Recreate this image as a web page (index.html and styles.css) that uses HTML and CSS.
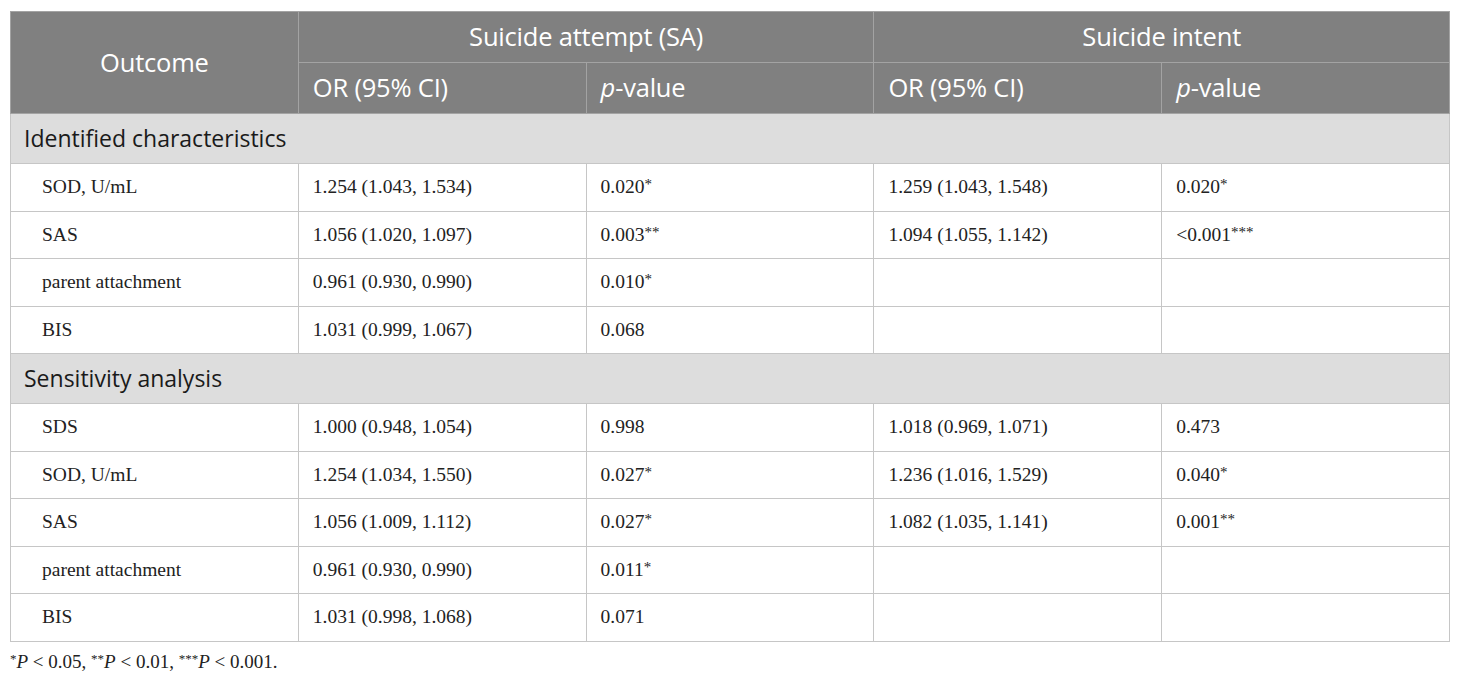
FILE: index.html
```html
<!DOCTYPE html>
<html>
<head>
<meta charset="utf-8">
<link rel="stylesheet" href="styles.css">
</head>
<body>
<div class="page">
<table class="data">
  <colgroup>
    <col class="c"><col class="c"><col class="c"><col class="c"><col class="c">
  </colgroup>
  <thead>
    <tr class="h1">
      <th rowspan="2" class="center">Outcome</th>
      <th colspan="2" class="center">Suicide attempt (SA)</th>
      <th colspan="2" class="center">Suicide intent</th>
    </tr>
    <tr class="h2">
      <th>OR (95% CI)</th>
      <th><i>p</i>-value</th>
      <th>OR (95% CI)</th>
      <th><i>p</i>-value</th>
    </tr>
  </thead>
  <tbody>
    <tr class="sec"><td colspan="5">Identified characteristics</td></tr>
    <tr><td class="lab">SOD, U/mL</td><td>1.254 (1.043, 1.534)</td><td>0.020<span class="st">*</span></td><td>1.259 (1.043, 1.548)</td><td>0.020<span class="st">*</span></td></tr>
    <tr><td class="lab">SAS</td><td>1.056 (1.020, 1.097)</td><td>0.003<span class="st">**</span></td><td>1.094 (1.055, 1.142)</td><td>&lt;0.001<span class="st">***</span></td></tr>
    <tr><td class="lab">parent attachment</td><td>0.961 (0.930, 0.990)</td><td>0.010<span class="st">*</span></td><td></td><td></td></tr>
    <tr><td class="lab">BIS</td><td>1.031 (0.999, 1.067)</td><td>0.068</td><td></td><td></td></tr>
    <tr class="sec"><td colspan="5">Sensitivity analysis</td></tr>
    <tr><td class="lab">SDS</td><td>1.000 (0.948, 1.054)</td><td>0.998</td><td>1.018 (0.969, 1.071)</td><td>0.473</td></tr>
    <tr><td class="lab">SOD, U/mL</td><td>1.254 (1.034, 1.550)</td><td>0.027<span class="st">*</span></td><td>1.236 (1.016, 1.529)</td><td>0.040<span class="st">*</span></td></tr>
    <tr><td class="lab">SAS</td><td>1.056 (1.009, 1.112)</td><td>0.027<span class="st">*</span></td><td>1.082 (1.035, 1.141)</td><td>0.001<span class="st">**</span></td></tr>
    <tr><td class="lab">parent attachment</td><td>0.961 (0.930, 0.990)</td><td>0.011<span class="st">*</span></td><td></td><td></td></tr>
    <tr><td class="lab">BIS</td><td>1.031 (0.998, 1.068)</td><td>0.071</td><td></td><td></td></tr>
  </tbody>
</table>
<p class="note"><sup>*</sup><i>P</i> &lt; 0.05, <sup>**</sup><i>P</i> &lt; 0.01, <sup>***</sup><i>P</i> &lt; 0.001.</p>
</div>
</body>
</html>
```
FILE: styles.css
```css
html, body {
  margin: 0;
  padding: 0;
  background: #ffffff;
}
.page {
  padding: 11px 10px 0 10px;
}
.data {
  width: 1440px;
  border-collapse: collapse;
  table-layout: fixed;
  border: 1px solid #c6c6c6;
}
.data col.c {
  width: 20%;
}
.data th {
  background: #808080;
  color: #ffffff;
  font-family: "Open Sans", "Noto Sans", sans-serif;
  font-weight: 400;
  font-size: 25.5px;
  letter-spacing: -0.2px;
  text-align: left;
  padding: 0 14px 2px 14px;
  border: 1px solid #a3a3a3;
  height: 51px;
  box-sizing: border-box;
}
.data th.center {
  text-align: center;
}
.data th i {
  font-style: italic;
}
.data tr.sec td {
  background: #dddddd;
  font-family: "Open Sans", "Noto Sans", sans-serif;
  font-size: 23px;
  color: #1a1a1a;
  padding: 0 13px 2px 13px;
  height: 50px;
  border: 1px solid #c6c6c6;
}
.data td {
  font-family: "Liberation Serif", "Times New Roman", serif;
  font-size: 19.5px;
  color: #222222;
  padding: 0 14px;
  height: 47.5px;
  box-sizing: border-box;
  border: 1px solid #c6c6c6;
  vertical-align: middle;
}
.data td.lab {
  padding-left: 31px;
}
.st {
  font-size: 15px;
  vertical-align: 4px;
  line-height: 0;
}
.note {
  margin: 9px 0 0 0;
  font-family: "Liberation Serif", "Times New Roman", serif;
  font-size: 19px;
  color: #222222;
}
.note sup {
  font-size: 13px;
  vertical-align: 5px;
  line-height: 0;
}
```
